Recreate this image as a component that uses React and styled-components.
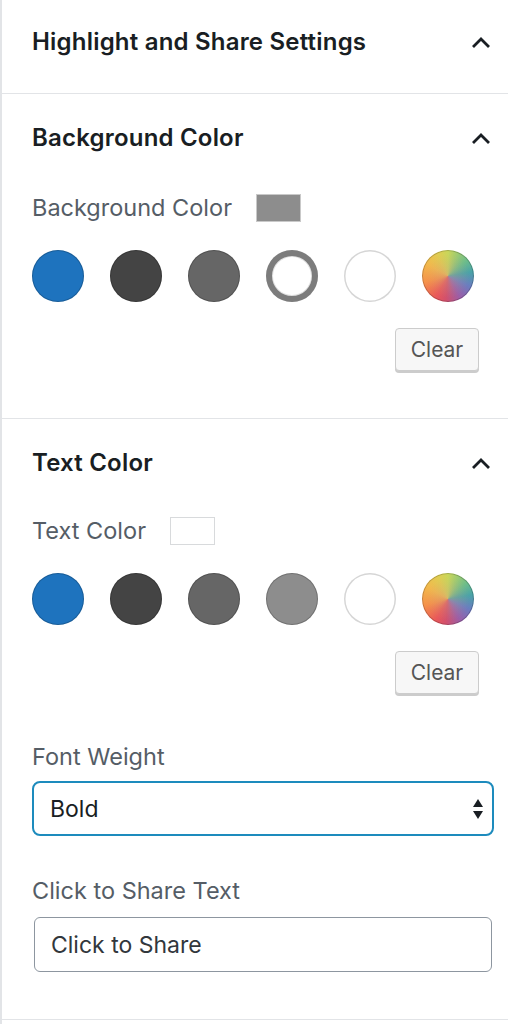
import React, { useState } from "react";
import styled, { createGlobalStyle } from "styled-components";

const GlobalStyle = createGlobalStyle`
  * { box-sizing: border-box; }
  body {
    margin: 0;
    background: #fff;
    font-family: Inter, "Noto Sans", "Liberation Sans", sans-serif;
  }
`;

const Sidebar = styled.div`
  width: 508px;
  min-height: 1024px;
  background: #fff;
  border-left: 2px solid #e2e4e7;
`;

const Section = styled.div`
  border-bottom: 1px solid #e2e4e7;
  padding: ${(p) => (p.$top ? "29px 14px 38px 30px" : "31px 14px 47px 30px")};
`;

const Header = styled.div`
  display: flex;
  align-items: center;
  justify-content: space-between;
  height: 26px;
`;

const Heading = styled.h2`
  margin: 0;
  font-size: 24px;
  line-height: 26px;
  font-weight: 600;
  color: #191e23;
  letter-spacing: 0.2px;
`;

const Chevron = styled.svg`
  width: 22px;
  height: 14px;
  margin-right: 2px;
`;

const LabelRow = styled.div`
  display: flex;
  align-items: center;
  gap: 24px;
  height: 30px;
  margin-top: ${(p) => p.$mt || 42}px;
`;

const Label = styled.div`
  font-size: 23.5px;
  color: #555d66;
  line-height: 26px;
  margin-top: ${(p) => p.$mt || 0}px;
`;

const CurrentSwatch = styled.div`
  width: 45px;
  height: 28px;
  background: ${(p) => p.$color};
  border: 1px solid ${(p) => (p.$color === "#fff" ? "#d8dadc" : "#c9c9c9")};
`;

const Palette = styled.div`
  display: flex;
  gap: 26px;
  margin-top: 27px;
`;

const Circle = styled.button`
  width: 52px;
  height: 52px;
  border-radius: 50%;
  padding: 0;
  cursor: pointer;
  border: none;
  background: ${(p) => p.$color};
  box-shadow: ${(p) =>
    p.$selected
      ? `inset 0 0 0 6px #7c7c7c, inset 0 0 0 7px rgba(0,0,0,0.12)`
      : p.$color === "#fff"
      ? "inset 0 0 0 1.5px #d6d6d6"
      : "inset 0 0 0 1px rgba(0,0,0,0.2)"};
`;

const CustomCircle = styled(Circle)`
  background: radial-gradient(circle at 50% 50%, rgba(200, 160, 130, 0.45), rgba(200, 160, 130, 0) 60%),
    conic-gradient(
      from 0deg,
      #c9d65a,
      #6dbd8a 50deg,
      #4aa3a8 80deg,
      #6a7dc0 115deg,
      #9a5fa8 150deg,
      #d2506c 185deg,
      #e9585a 210deg,
      #f5924a 255deg,
      #f2b84c 300deg,
      #e0cc52 335deg,
      #c9d65a
    );
  box-shadow: inset 0 0 0 1px rgba(0, 0, 0, 0.2);
`;

const ClearRow = styled.div`
  display: flex;
  justify-content: flex-end;
  margin-top: 26px;
  padding-right: 15px;
`;

const ClearButton = styled.button`
  width: 84px;
  height: 43px;
  font-family: inherit;
  font-size: 21px;
  color: #555;
  background: #f7f7f7;
  border: 1px solid #cccccc;
  border-radius: 4px;
  box-shadow: 0 2px 0 #cccccc;
  cursor: pointer;
`;

const SelectBox = styled.div`
  position: relative;
  margin-top: 11px;
  width: 462px;
  height: 55px;
  border: 2.5px solid #1d8bbd;
  border-radius: 8px;
  display: flex;
  align-items: center;
  padding-left: 16px;
  font-size: 23px;
  color: #191e23;
`;

const SelectArrows = styled.svg`
  position: absolute;
  right: 8px;
  top: 15px;
  width: 12px;
  height: 22px;
`;

const TextInput = styled.input`
  display: block;
  margin: 13px 0 0 2px;
  width: 458px;
  height: 55px;
  border: 1.5px solid #8d96a0;
  border-radius: 6px;
  padding: 0 16px;
  font-family: inherit;
  font-size: 23px;
  color: #32373c;
  outline: none;
`;

const ChevronUp = () => (
  <Chevron viewBox="0 0 22 14">
    <path d="M3 12 L11 4 L19 12" fill="none" stroke="#191e23" strokeWidth="2.8" />
  </Chevron>
);

const bgColors = ["#1e73be", "#444444", "#666666", "#888888", "#fff"];
const textColors = ["#1e73be", "#444444", "#666666", "#8d8d8d", "#fff"];

const ColorPanel = ({ title, current, colors, selected }) => (
  <Section>
    <Header>
      <Heading>{title}</Heading>
      <ChevronUp />
    </Header>
    <LabelRow $mt={title === "Text Color" ? 40 : 42}>
      <Label>{title}</Label>
      <CurrentSwatch $color={current} />
    </LabelRow>
    <Palette>
      {colors.map((c, i) => (
        <Circle key={i} $color={selected === i ? "#fff" : c} $selected={selected === i} />
      ))}
      <CustomCircle />
    </Palette>
    <ClearRow>
      <ClearButton>Clear</ClearButton>
    </ClearRow>
    {title === "Text Color" && <TextExtras />}
  </Section>
);

const TextExtras = () => {
  const [text, setText] = useState("Click to Share");
  return (
    <>
      <Label $mt={50}>Font Weight</Label>
      <SelectBox>
        Bold
        <SelectArrows viewBox="0 0 12 22">
          <path d="M6 1 L11 9 L1 9 Z" fill="#191e23" />
          <path d="M1 13 L11 13 L6 21 Z" fill="#191e23" />
        </SelectArrows>
      </SelectBox>
      <Label $mt={42}>Click to Share Text</Label>
      <TextInput value={text} onChange={(e) => setText(e.target.value)} />
    </>
  );
};

const App = () => {
  return (
    <>
      <GlobalStyle />
      <Sidebar>
        <Section $top>
          <Header>
            <Heading>Highlight and Share Settings</Heading>
            <ChevronUp />
          </Header>
        </Section>
        <ColorPanel title="Background Color" current="#8d8d8d" colors={bgColors} selected={3} />
        <ColorPanel title="Text Color" current="#fff" colors={textColors} selected={-1} />
      </Sidebar>
    </>
  );
};

export default App;
